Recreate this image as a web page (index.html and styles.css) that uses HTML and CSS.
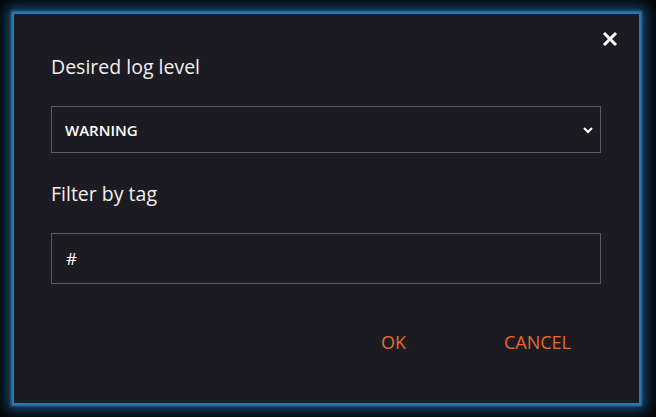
FILE: index.html
```html
<!DOCTYPE html>
<html lang="en">

<head>
    <meta charset="UTF-8">
    <meta name="viewport" content="width=device-width, initial-scale=1.0">
    <title>Log settings</title>
    <link rel="stylesheet" href="styles.css">
</head>

<body>
    <!-- 日志级别弹窗 -->
    <div class="log-dialog">
        <button class="close-btn" aria-label="close">
            <svg width="16" height="16" viewBox="0 0 16 16">
                <path d="M2 2 L14 14 M14 2 L2 14" stroke="#fff" stroke-width="3" stroke-linecap="butt" />
            </svg>
        </button>
        <label class="field-label">Desired log level</label>
        <div class="select-box">
            <span class="select-value">WARNING</span>
            <svg class="select-arrow" width="10" height="7" viewBox="0 0 10 7">
                <path d="M1 1 L5 5 L9 1" fill="none" stroke="#fff" stroke-width="2" />
            </svg>
        </div>
        <label class="field-label">Filter by tag</label>
        <div class="text-input">#</div>
        <div class="dialog-actions">
            <button class="act-btn">OK</button>
            <button class="act-btn">CANCEL</button>
        </div>
    </div>
</body>

</html>
```

FILE: styles.css
```css
html,
body {
    padding: 0;
    margin: 0;
}

body {
    background-color: #050608;
    padding: 14px 17px 14px 14px;
    font-family: "Open Sans", "Noto Sans", sans-serif;
    color: #fff;
}

/* 弹窗主体 */
.log-dialog {
    position: relative;
    width: 625px;
    height: 389px;
    box-sizing: border-box;
    padding: 41px 38px 0 37px;
    background-color: #1c1b21;
    box-shadow: 0 0 2px 3px #2a7ab3, 0 0 12px 7px #174b73;
    display: flex;
    flex-direction: column;
}

.close-btn {
    position: absolute;
    top: 17px;
    right: 21px;
    padding: 0;
    border: 0;
    background: none;
    width: 16px;
    height: 16px;
}

.close-btn svg {
    display: block;
}

.field-label {
    display: block;
    font-size: 19.5px;
    line-height: 24px;
    height: 24px;
    font-weight: 400;
    color: #f2f2f2;
}

.select-box {
    margin-top: 27px;
    margin-bottom: 29px;
    height: 47px;
    box-sizing: border-box;
    border: 1px solid #5c5b60;
    display: flex;
    align-items: center;
    justify-content: space-between;
    padding: 0 7px 0 13px;
}

.select-value {
    font-size: 15px;
    font-weight: 600;
}

.select-arrow {
    display: block;
    margin-top: 2px;
}

.text-input {
    margin-top: 27px;
    height: 51px;
    box-sizing: border-box;
    border: 1px solid #5c5b60;
    padding: 0 14px;
    display: flex;
    align-items: center;
    font-size: 17px;
}

.dialog-actions {
    margin-top: 43px;
    display: flex;
    justify-content: flex-end;
    gap: 38px;
}

.act-btn {
    border: 0;
    background: none;
    color: #e9692f;
    font-family: "Open Sans", "Noto Sans", sans-serif;
    font-size: 18px;
    font-weight: 400;
    line-height: 22px;
    padding: 4px 30px;
}
```
